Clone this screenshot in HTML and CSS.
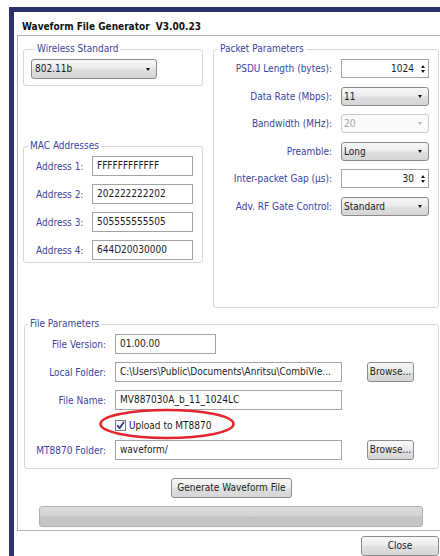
FILE: index.html
```html
<!DOCTYPE html>
<html lang="en">
<head>
<meta charset="utf-8">
<title>Waveform File Generator</title>
<link rel="stylesheet" href="styles.css">
</head>
<body>
<div class="window">
  <div class="title">Waveform File Generator&nbsp; V3.00.23</div>
  <div class="panel">
    <div class="top">
      <div class="col-left">
        <fieldset class="group wireless">
          <legend>Wireless Standard</legend>
          <div class="combo std">802.11b</div>
        </fieldset>
        <fieldset class="group mac">
          <legend>MAC Addresses</legend>
          <div class="mac-grid">
            <span class="lbl">Address 1:</span><div class="field">FFFFFFFFFFFF</div>
            <span class="lbl">Address 2:</span><div class="field">202222222202</div>
            <span class="lbl">Address 3:</span><div class="field">505555555505</div>
            <span class="lbl">Address 4:</span><div class="field">644D20030000</div>
          </div>
        </fieldset>
      </div>
      <fieldset class="group packet">
        <legend>Packet Parameters</legend>
        <div class="packet-grid">
          <span class="lbl">PSDU Length (bytes):</span>
          <div class="spin"><span class="val">1024</span><span class="arrows"><i class="up"></i><i class="down"></i></span></div>
          <span class="lbl">Data Rate (Mbps):</span>
          <div class="combo">11</div>
          <span class="lbl">Bandwidth (MHz):</span>
          <div class="combo disabled">20</div>
          <span class="lbl">Preamble:</span>
          <div class="combo">Long</div>
          <span class="lbl">Inter-packet Gap (µs):</span>
          <div class="spin"><span class="val">30</span><span class="arrows"><i class="up"></i><i class="down"></i></span></div>
          <span class="lbl">Adv. RF Gate Control:</span>
          <div class="combo">Standard</div>
        </div>
      </fieldset>
    </div>

    <fieldset class="group file">
      <legend>File Parameters</legend>
      <div class="file-grid">
        <span class="lbl">File Version:</span>
        <div class="field short">01.00.00</div>
        <span class="lbl">Local Folder:</span>
        <div class="field">C:\Users\Public\Documents\Anritsu\CombiVie...</div>
        <button class="btn browse">Browse...</button>
        <span class="lbl">File Name:</span>
        <div class="field">MV887030A_b_11_1024LC</div>
        <div class="check-row">
          <span class="box"><svg viewBox="0 0 11 11" width="11" height="11"><path d="M2.6 5.6 L4.6 8.2 L8.6 2.4" fill="none" stroke="#2a3585" stroke-width="1.7" stroke-linecap="round" stroke-linejoin="round"/></svg></span>
          <span class="check-text">Upload to MT8870</span>
          <svg class="ring" viewBox="0 0 136 32" width="136" height="32"><ellipse cx="68" cy="16" rx="66.5" ry="14" fill="none" stroke="#e2262c" stroke-width="2.6"/></svg>
        </div>
        <span class="lbl">MT8870 Folder:</span>
        <div class="field">waveform/</div>
        <button class="btn browse">Browse...</button>
      </div>
    </fieldset>

    <button class="btn generate">Generate Waveform File</button>
    <div class="progress"></div>
  </div>
  <div class="footer">
    <button class="btn close">Close</button>
  </div>
</div>
</body>
</html>
```

FILE: styles.css
```css
html, body {
  margin: 0;
  padding: 0;
  overflow: hidden;
  background: #fff;
}

body {
  width: 440px;
  height: 556px;
  font-family: "DejaVu Sans Condensed", "DejaVu Sans", sans-serif;
  font-size: 10px;
  color: #1c1c1c;
}

/* dialog frame: dark top and left edges */
.window {
  margin: 7px 0 0 9px;
  height: 549px;
  box-sizing: border-box;
  border-top: 5px solid #2b316b;
  border-left: 5px solid #2b316b;
}

.title {
  padding: 7px 0 0 8px;
  height: 16px;
  line-height: 16px;
  font-weight: bold;
  color: #111;
  white-space: nowrap;
}

.panel {
  margin-left: 3px;
  width: 428px;
  box-sizing: border-box;
  border: 1px solid #b2b2b2;
  border-right: none;
  padding: 7px 0 3px 5px;
  display: flex;
  flex-direction: column;
  align-items: flex-start;
}

.top {
  display: grid;
  grid-template-columns: 180px 226px;
  column-gap: 10px;
  align-items: start;
}

.col-left {
  display: flex;
  flex-direction: column;
  gap: 54px;
}

/* group boxes */
.group {
  margin: 0;
  padding: 0;
  min-width: 0;
  border: 1px solid #d2d9e2;
  border-radius: 3px;
  box-sizing: border-box;
}

.group legend {
  margin-left: 4px;
  padding: 0 2px;
  color: #3a44a2;
  line-height: 12px;
}

.lbl {
  color: #3a44a2;
  white-space: nowrap;
}

.wireless {
  padding: 4px 0 6px 7px;
}

.wireless .combo {
  width: 126px;
}

.mac-grid {
  display: grid;
  grid-template-columns: 56px 101px;
  grid-auto-rows: 20px;
  row-gap: 8px;
  align-items: center;
  padding: 4px 0 2px 12px;
}

.packet {
  height: 265px;
}

.packet .group legend {
  margin-left: 4px;
}

.packet-grid {
  display: grid;
  grid-template-columns: 1fr 88px;
  grid-auto-rows: 19px;
  row-gap: 8.5px;
  column-gap: 9px;
  align-items: center;
  padding: 4px 9px 0 0;
}

.packet-grid .lbl {
  text-align: right;
}

.file {
  margin-top: 10px;
  margin-left: 1px;
  width: 415px;
}

.file legend {
  margin-left: 3px;
}

.file-grid {
  display: grid;
  grid-template-columns: 70px 227px 47px;
  grid-template-rows: 20px 20px 20px 14px 20px;
  column-gap: 9px;
  row-gap: 8px;
  align-items: center;
  padding: 4px 0 8px 11px;
}

.file-grid .lbl {
  grid-column: 1;
  text-align: right;
}

.file-grid .short {
  width: 101px;
}

.file-grid .browse {
  margin-left: 16px;
  width: 47px;
}

/* controls */
.field {
  height: 20px;
  box-sizing: border-box;
  border: 1px solid #a3a3a3;
  background: #fff;
  padding: 0 4px;
  line-height: 18px;
  white-space: nowrap;
  overflow: hidden;
  color: #1c1c1c;
}

.combo {
  display: flex;
  align-items: center;
  justify-content: space-between;
  height: 19px;
  box-sizing: border-box;
  border: 1px solid #8a8a8a;
  border-radius: 3px;
  background: linear-gradient(#f7f7f7, #ececec 45%, #dedede 55%, #d5d5d5);
  padding: 0 6px 0 2px;
  line-height: 17px;
}

.combo.std {
  height: 20px;
  padding-left: 3px;
  line-height: 18px;
}

.combo::after {
  content: "";
  border-left: 2.5px solid transparent;
  border-right: 2.5px solid transparent;
  border-top: 3px solid #111;
}

.combo.disabled {
  border-color: #cbcbcb;
  background: #fafafa;
  color: #a3a3a3;
}

.combo.disabled::after {
  border-top-color: #b2b2b2;
}

.spin {
  display: flex;
  align-items: center;
  height: 19px;
  box-sizing: border-box;
  border: 1px solid #a3a3a3;
  background: #fff;
  padding: 0 3px 0 3px;
  line-height: 17px;
}

.spin .val {
  flex: 1;
  text-align: right;
  padding-right: 7px;
}

.arrows {
  display: flex;
  flex-direction: column;
  gap: 2px;
}

.arrows i {
  display: block;
  width: 0;
  height: 0;
  border-left: 2.5px solid transparent;
  border-right: 2.5px solid transparent;
}

.arrows .up {
  border-bottom: 3px solid #1a1a1a;
}

.arrows .down {
  border-top: 3px solid #1a1a1a;
}

.btn {
  height: 20px;
  box-sizing: border-box;
  border: 1px solid #8c8c8c;
  border-radius: 3px;
  background: linear-gradient(#f8f8f8, #ededed 45%, #dfdfdf 55%, #d6d6d6);
  font: inherit;
  color: #1c1c1c;
  padding: 0;
  line-height: 18px;
  white-space: nowrap;
}

.check-row {
  grid-column: 2 / 4;
  display: flex;
  align-items: center;
  gap: 3px;
  height: 14px;
  position: relative;
}

.box {
  width: 11px;
  height: 11px;
  box-sizing: border-box;
  border: 1px solid #7f7f7f;
  background: linear-gradient(#f3f3f3, #fff);
  display: flex;
}

.box svg {
  margin: -1px;
}

.check-text {
  color: #1c1c1c;
}

/* red highlight ring drawn over the checkbox */
.ring {
  position: absolute;
  left: -16px;
  top: -10px;
  pointer-events: none;
}

.generate {
  margin: 9px 0 0 148px;
  width: 121px;
}

.progress {
  margin: 8px 0 0 16px;
  width: 384px;
  height: 21px;
  box-sizing: border-box;
  border: 1px solid #b0b0b0;
  border-radius: 3px;
  background: linear-gradient(#dcdcdc, #d3d3d3 48%, #c2c2c2 52%, #c7c7c7);
}

.footer {
  display: flex;
  justify-content: flex-end;
  padding: 5px 1px 0 0;
}

.close {
  width: 78px;
}
```
